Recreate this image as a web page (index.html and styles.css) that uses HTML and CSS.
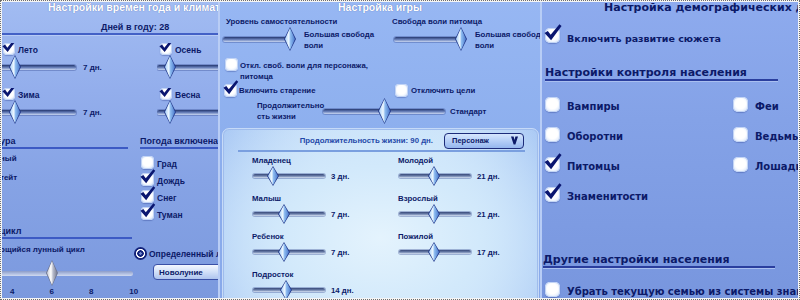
FILE: index.html
```html
<!DOCTYPE html>
<html lang="ru">
<head>
<meta charset="utf-8">
<title>Настройки</title>
<link rel="stylesheet" href="styles.css">
</head>
<body>
<div class="frame">

  <section class="panel p1">
    <h2 class="ptitle p1-title">Настройки времен года и климата</h2>
    <div class="days">Дней в году: 28</div>
    <div class="seasons">
      <div class="season">
        <div class="chk"><span class="cb on"><svg class="tick" viewBox="0 0 17 17"><polygon points="0.5,8.5 3.6,6.6 6.3,10.2 14.6,0.2 16.6,1.9 6.7,15.4"/></svg></span><span>Лето</span></div>
        <div class="srow"><div class="slider s-season"><span class="track"></span><span class="thumb" style="left:9px"></span></div><span class="val">7 дн.</span></div>
      </div>
      <div class="season">
        <div class="chk"><span class="cb on"><svg class="tick" viewBox="0 0 17 17"><polygon points="0.5,8.5 3.6,6.6 6.3,10.2 14.6,0.2 16.6,1.9 6.7,15.4"/></svg></span><span>Осень</span></div>
        <div class="srow"><div class="slider s-season"><span class="track"></span><span class="thumb" style="left:7px"></span></div><span class="val">7 дн.</span></div>
      </div>
      <div class="season">
        <div class="chk"><span class="cb on"><svg class="tick" viewBox="0 0 17 17"><polygon points="0.5,8.5 3.6,6.6 6.3,10.2 14.6,0.2 16.6,1.9 6.7,15.4"/></svg></span><span>Зима</span></div>
        <div class="srow"><div class="slider s-season"><span class="track"></span><span class="thumb" style="left:9px"></span></div><span class="val">7 дн.</span></div>
      </div>
      <div class="season">
        <div class="chk"><span class="cb on"><svg class="tick" viewBox="0 0 17 17"><polygon points="0.5,8.5 3.6,6.6 6.3,10.2 14.6,0.2 16.6,1.9 6.7,15.4"/></svg></span><span>Весна</span></div>
        <div class="srow"><div class="slider s-season"><span class="track"></span><span class="thumb" style="left:7px"></span></div><span class="val">7 дн.</span></div>
      </div>
    </div>

    <div class="p1-lower">
      <div class="p1-left">
        <h3 class="sec sec-temp">ура</h3>
        <p class="frag f-1">ный</p>
        <p class="frag f-2">тейт</p>
        <h3 class="sec sec-moon">цикл</h3>
        <p class="frag f-3">ощийся лунный цикл</p>
        <div class="slider moon"><span class="track"></span><span class="thumb" style="left:46px"></span></div>
        <div class="ticks"><span>4</span><span>6</span><span>8</span><span>10</span></div>
      </div>
      <div class="p1-right">
        <h3 class="sec sec-weather">Погода включена</h3>
        <div class="wlist">
          <div class="chk"><span class="cb"></span><span>Град</span></div>
          <div class="chk"><span class="cb on"><svg class="tick" viewBox="0 0 17 17"><polygon points="0.5,8.5 3.6,6.6 6.3,10.2 14.6,0.2 16.6,1.9 6.7,15.4"/></svg></span><span>Дождь</span></div>
          <div class="chk"><span class="cb on"><svg class="tick" viewBox="0 0 17 17"><polygon points="0.5,8.5 3.6,6.6 6.3,10.2 14.6,0.2 16.6,1.9 6.7,15.4"/></svg></span><span>Снег</span></div>
          <div class="chk"><span class="cb on"><svg class="tick" viewBox="0 0 17 17"><polygon points="0.5,8.5 3.6,6.6 6.3,10.2 14.6,0.2 16.6,1.9 6.7,15.4"/></svg></span><span>Туман</span></div>
        </div>
        <div class="radio-row"><span class="radio"></span><span>Определенный лунный цикл</span></div>
        <div class="dd dd-moon">Новолуние</div>
      </div>
    </div>
  </section>

  <section class="panel p2">
    <h2 class="ptitle p2-title">Настройка игры</h2>
    <div class="auto-grid">
      <div class="auto">
        <div class="lbl">Уровень самостоятельности</div>
        <div class="srow"><div class="slider s-auto"><span class="track"></span><span class="thumb" style="left:61px"></span></div><span class="val2">Большая свобода<br>воли</span></div>
      </div>
      <div class="auto">
        <div class="lbl">Свобода воли питомца</div>
        <div class="srow"><div class="slider s-auto"><span class="track"></span><span class="thumb" style="left:61px"></span></div><span class="val2">Большая свобода<br>воли</span></div>
      </div>
    </div>
    <div class="opt opt-free"><span class="cb"></span><span>Откл. своб. воли для персонажа,<br>питомца</span></div>
    <div class="opt-pair">
      <div class="opt"><span class="cb on"><svg class="tick" viewBox="0 0 17 17"><polygon points="0.5,8.5 3.6,6.6 6.3,10.2 14.6,0.2 16.6,1.9 6.7,15.4"/></svg></span><span>Включить старение</span></div>
      <div class="opt"><span class="cb"></span><span>Отключить цели</span></div>
    </div>
    <div class="life">
      <span class="life-lbl">Продолжительно<br>сть жизни</span>
      <div class="slider s-life"><span class="track"></span><span class="thumb" style="left:55px"></span></div>
      <span>Стандарт</span>
    </div>
    <div class="inner">
      <div class="inner-head">
        <span class="life-total">Продолжительность жизни: 90 дн.</span>
        <div class="dd dd-pers"><span>Персонаж</span><svg class="arrow" viewBox="0 0 8 9"><polygon points="0,0 3,0 4,4 5,0 8,0 5,9 3,9"/></svg></div>
      </div>
      <div class="ages">
        <div class="age"><div class="age-lbl">Младенец</div><div class="srow"><div class="slider s-age"><span class="track"></span><span class="thumb" style="left:14px"></span></div><span class="val">3 дн.</span></div></div>
        <div class="age"><div class="age-lbl">Молодой</div><div class="srow"><div class="slider s-age"><span class="track"></span><span class="thumb" style="left:29px"></span></div><span class="val">21 дн.</span></div></div>
        <div class="age"><div class="age-lbl">Малыш</div><div class="srow"><div class="slider s-age"><span class="track"></span><span class="thumb" style="left:25px"></span></div><span class="val">7 дн.</span></div></div>
        <div class="age"><div class="age-lbl">Взрослый</div><div class="srow"><div class="slider s-age"><span class="track"></span><span class="thumb" style="left:29px"></span></div><span class="val">21 дн.</span></div></div>
        <div class="age"><div class="age-lbl">Ребенок</div><div class="srow"><div class="slider s-age"><span class="track"></span><span class="thumb" style="left:25px"></span></div><span class="val">7 дн.</span></div></div>
        <div class="age"><div class="age-lbl">Пожилой</div><div class="srow"><div class="slider s-age"><span class="track"></span><span class="thumb" style="left:29px"></span></div><span class="val">17 дн.</span></div></div>
        <div class="age"><div class="age-lbl">Подросток</div><div class="srow"><div class="slider s-age"><span class="track"></span><span class="thumb" style="left:27px"></span></div><span class="val">14 дн.</span></div></div>
      </div>
    </div>
  </section>

  <section class="panel p3">
    <h2 class="p3-title">Настройка демографических данных</h2>
    <div class="big-chk story"><span class="cb big on"><svg class="tick" viewBox="0 0 17 17"><polygon points="0.5,8.5 3.6,6.6 6.3,10.2 14.6,0.2 16.6,1.9 6.7,15.4"/></svg></span><span>Включить развитие сюжета</span></div>
    <h3 class="sec3 sec3-pop">Настройки контроля населения</h3>
    <div class="pop-grid">
      <div class="big-chk"><span class="cb big"></span><span>Вампиры</span></div>
      <div class="big-chk"><span class="cb big"></span><span>Феи</span></div>
      <div class="big-chk"><span class="cb big"></span><span>Оборотни</span></div>
      <div class="big-chk"><span class="cb big"></span><span>Ведьмы</span></div>
      <div class="big-chk"><span class="cb big on"><svg class="tick" viewBox="0 0 17 17"><polygon points="0.5,8.5 3.6,6.6 6.3,10.2 14.6,0.2 16.6,1.9 6.7,15.4"/></svg></span><span>Питомцы</span></div>
      <div class="big-chk"><span class="cb big"></span><span>Лошади</span></div>
      <div class="big-chk"><span class="cb big on"><svg class="tick" viewBox="0 0 17 17"><polygon points="0.5,8.5 3.6,6.6 6.3,10.2 14.6,0.2 16.6,1.9 6.7,15.4"/></svg></span><span>Знаменитости</span></div>
    </div>
    <h3 class="sec3 sec3-other">Другие настройки населения</h3>
    <div class="big-chk last"><span class="cb big"></span><span>Убрать текущую семью из системы знаменитостей</span></div>
  </section>

</div>
</body>
</html>
```

FILE: styles.css
```css
* { box-sizing: border-box; margin: 0; padding: 0; }

body {
  margin: 0;
  width: 800px;
  height: 300px;
  overflow: hidden;
  background: #ffffff;
  font-family: "DejaVu Sans", "Liberation Sans", sans-serif;
  font-weight: bold;
  color: #0c1a68;
}

h2, h3 { font-weight: bold; }

.frame {
  position: relative;
  display: flex;
  width: 800px;
  height: 300px;
  overflow: hidden;
}
.frame::before {
  content: "";
  position: absolute;
  inset: 0;
  border: 2px solid #f4f4f4;
  z-index: 5;
}
.frame::after {
  content: "";
  position: absolute;
  inset: 0;
  border: 1px dotted #6e6e6e;
  z-index: 6;
}

.panel {
  flex: none;
  height: 300px;
  overflow: hidden;
  white-space: nowrap;
}

/* ---------- shared widgets ---------- */
.cb {
  position: relative;
  flex: none;
  display: inline-block;
  width: 12px;
  height: 12px;
  border-radius: 4px;
  background: radial-gradient(circle at 50% 45%, #ffffff 45%, #dce8fb 80%, #b5cbf2 100%);
  box-shadow: inset 0 0 0 1px #c2d4f5, 0 1px 1px rgba(40, 60, 140, 0.35);
}
.tick {
  position: absolute;
  left: -8%;
  top: -30%;
  width: 120%;
  height: 120%;
  fill: #0a1670;
  overflow: visible;
}

.slider {
  position: relative;
  flex: none;
  display: flex;
  align-items: center;
  height: 24px;
}
.track {
  display: block;
  width: 100%;
  height: 5px;
  border-radius: 3px;
  background: linear-gradient(180deg, #25386f 0%, #5e76b2 45%, #c9d7f3 100%);
  box-shadow: 0 0 0 1px rgba(50, 70, 140, 0.35);
}
.thumb {
  position: absolute;
  top: 0;
  width: 12px;
  height: 24px;
  clip-path: polygon(50% 0, 100% 50%, 50% 100%, 0 50%);
  background: #23398a;
}
.thumb::after {
  content: "";
  position: absolute;
  inset: 1px;
  clip-path: polygon(50% 0, 100% 50%, 50% 100%, 0 50%);
  background: linear-gradient(90deg, #a9cff8 0%, #eef8ff 38%, #8dbbf0 55%, #4a78cc 100%);
}

.srow {
  display: flex;
  align-items: center;
}

.ptitle {
  font-family: "Liberation Sans", "DejaVu Sans", sans-serif;
  color: #ffffff;
  font-size: 10.5px;
  line-height: 14px;
  text-shadow: 0 0 1px rgba(30, 50, 130, 0.6);
}

.dd {
  display: flex;
  align-items: center;
  border-radius: 4px;
}

/* ---------- panel 1 ---------- */
.p1 {
  width: 220px;
  border-right: 2px solid #b9cdf5;
  background: linear-gradient(180deg, #a2bcf2 0%, #93aeec 30%, #86a3e5 60%, #7b99de 100%);
  font-family: "Liberation Sans", "DejaVu Sans", sans-serif;
  font-size: 8.5px;
}
.p1-title {
  padding: 0 0 0 48px;
}
.days {
  margin-top: 8px;
  padding-left: 101px;
  font-size: 9px;
  line-height: 11px;
  border-bottom: 2px solid #4361c6;
  box-shadow: 0 1px 0 #b7cbf5;
}
.seasons {
  display: grid;
  grid-template-columns: 157px 61px;
  padding-top: 8px;
}
.season {
  height: 45px;
  overflow: hidden;
}
.season .chk { margin-left: 3px; }
.chk {
  display: flex;
  align-items: center;
  gap: 3px;
  height: 12px;
  line-height: 10px;
}
.chk .cb + span { padding-top: 2px; }
.s-season { width: 76px; }
.p1 .val { margin-left: 7px; font-size: 8px; }

.p1-lower {
  display: flex;
  margin-top: 3px;
}
.p1-left {
  width: 134px;
  flex: none;
}
.sec {
  font-size: 9px;
  line-height: 11px;
  border-bottom: 2px solid #3c5ac4;
}
.sec-temp { width: 128px; }
.frag {
  font-size: 8px;
  line-height: 10px;
}
.f-1 { margin-top: 5px; }
.f-2 { margin-top: 9px; }
.sec-moon { width: 132px; margin-top: 43px; }
.f-3 { margin-top: 6px; }
.moon {
  width: 133px;
  height: 26px;
  margin-top: 5px;
}
.moon .track {
  height: 5px;
  background: linear-gradient(180deg, #8c9cc8 0%, #aebcdf 50%, #d0daf0 100%);
  box-shadow: none;
}
.moon .thumb {
  width: 12px;
  height: 26px;
  background: #6c7490;
}
.moon .thumb::after {
  background: linear-gradient(90deg, #c9ccd8 0%, #ffffff 40%, #b8bccb 60%, #7b8096 100%);
}
.ticks {
  display: flex;
  font-size: 8px;
  line-height: 10px;
  margin-top: 1px;
}
.ticks span:nth-child(1) { margin-left: 10px; }
.ticks span:nth-child(2) { margin-left: 35px; }
.ticks span:nth-child(3) { margin-left: 35px; }
.ticks span:nth-child(4) { margin-left: 36px; }

.p1-right {
  flex: none;
  width: 84px;
}
.sec-weather {
  margin-left: 6px;
}
.wlist {
  display: flex;
  flex-direction: column;
  gap: 4px;
  margin: 7px 0 0 7px;
}
.wlist .cb { width: 13px; height: 13px; }
.wlist .chk { gap: 3px; height: 13px; }
.radio-row {
  display: flex;
  align-items: center;
  gap: 2px;
  margin-top: 27px;
  height: 13px;
}
.radio {
  flex: none;
  width: 13px;
  height: 13px;
  border-radius: 50%;
  background: radial-gradient(circle, #6f86cc 0 1px, #14237a 1.5px 3px, #ffffff 3.5px 4.3px, #14237a 4.8px);
}
.dd-moon {
  width: 80px;
  height: 16px;
  margin: 4px 0 0 19px;
  padding-left: 5px;
  border: 1px solid #3a50a6;
  background: linear-gradient(180deg, #f4f8ff 0%, #d2e0f8 50%, #aec4ee 100%);
  font-size: 8px;
}

/* ---------- panel 2 ---------- */
.p2 {
  width: 322px;
  border-right: 2px solid #b8cdf6;
  background: linear-gradient(180deg, #97b7f3 0%, #8dafee 45%, #88a9ea 100%);
  font-family: "Liberation Sans", "DejaVu Sans", sans-serif;
  font-size: 7.8px;
}
.p2-title {
  text-align: center;
}
.auto-grid {
  display: grid;
  grid-template-columns: 169px 1fr;
  margin: 3px 0 0 3px;
}
.lbl {
  line-height: 10px;
  padding-left: 3px;
}
.auto:nth-child(2) .lbl { padding-left: 0; }
.auto:nth-child(2) .srow { margin-left: 2px; }
.s-auto { width: 68px; }
.val2 {
  margin-left: 13px;
  line-height: 11px;
  padding-top: 2px;
}
.opt {
  display: flex;
  align-items: center;
  gap: 2px;
}
.opt .cb { width: 13px; height: 13px; }
.opt-free {
  margin: 7px 0 0 5px;
  align-items: flex-start;
  line-height: 10.5px;
}
.opt-free > span:last-child { padding-top: 3px; }
.opt-pair {
  display: grid;
  grid-template-columns: 171px 1fr;
  margin: 1px 0 0 4px;
  height: 14px;
}
.opt-pair .opt:last-child .cb { margin-right: 1px; }
.life {
  display: flex;
  align-items: center;
  margin: 1px 0 0 37px;
  height: 26px;
}
.life-lbl {
  line-height: 11px;
  width: 66px;
}
.s-life {
  width: 122px;
  height: 26px;
}
.s-life .thumb { height: 26px; width: 13px; }
.life > span:last-child { margin-left: 5px; }

.inner {
  margin: 4px 1px 0 2px;
  height: 200px;
  border-radius: 7px 7px 0 0;
  border: 1px solid #c6daf8;
  box-shadow: inset 0 0 0 1px #9fbcec;
  background:
    radial-gradient(ellipse 70% 80% at 50% 55%, #e4f3fd 0%, #d2e9fb 45%, rgba(190, 219, 249, 0) 100%),
    linear-gradient(90deg, #a9c8f4 0%, #c6def9 30%, #c9e1fa 70%, #a9c8f4 100%);
}
.inner-head {
  display: flex;
  align-items: center;
  justify-content: flex-end;
  height: 23px;
  padding: 4px 1px 2px 0;
  margin: 0 13px 0 15px;
  border-bottom: 2px solid #7a9fdf;
}
.life-total {
  color: #2448a8;
  margin-right: 11px;
}
.dd-pers {
  width: 80px;
  height: 16px;
  justify-content: space-between;
  padding: 0 5px 0 7px;
  border: 1.5px solid #1d2c7a;
  background: linear-gradient(180deg, #d6e6fd 0%, #b5cff7 50%, #95b6ee 100%);
  font-size: 7.5px;
}
.arrow {
  width: 7px;
  height: 9px;
  fill: #0c1a68;
}
.ages {
  display: grid;
  grid-template-columns: 146px 1fr;
  row-gap: 8px;
  padding: 4px 0 0 29px;
}
.age-lbl {
  line-height: 10px;
}
.age .srow { margin-left: 1px; }
.s-age {
  width: 72px;
  height: 20px;
}
.s-age .track {
  height: 4px;
  background: linear-gradient(180deg, #38497a 0%, #6a7ea9 50%, #d8e4f6 100%);
}
.s-age .thumb {
  width: 12px;
  height: 20px;
}
.age .val { margin-left: 6px; }

/* ---------- panel 3 ---------- */
.p3 {
  width: 258px;
  padding-left: 3px;
  background: linear-gradient(180deg, #8eabee 0%, #84a2e7 40%, #7d9be2 75%, #7896de 100%);
  font-size: 10px;
}
.p3-title {
  font-size: 11px;
  line-height: 15px;
  padding-left: 59px;
}
.big-chk {
  display: flex;
  align-items: center;
  gap: 7px;
  height: 15px;
}
.cb.big {
  width: 15px;
  height: 15px;
  border-radius: 5px;
}
.big-chk .cb + span { padding-top: 3px; }
.story { margin-top: 13px; }
.story .cb + span { font-size: 9.5px; padding-top: 5px; }
.sec3 {
  font-size: 11px;
  line-height: 13px;
  border-bottom: 2px solid #2a3e9e;
  box-shadow: 0 1px 0 #a9bff0;
}
.sec3-pop {
  width: 233px;
  margin-top: 23px;
}
.pop-grid {
  display: grid;
  grid-template-columns: 188px 1fr;
  grid-auto-rows: 30px;
  margin-top: 16px;
}
.sec3-other {
  width: 232px;
  margin: 36px 0 0 -2px;
}
.last { margin-top: 14px; }
```
